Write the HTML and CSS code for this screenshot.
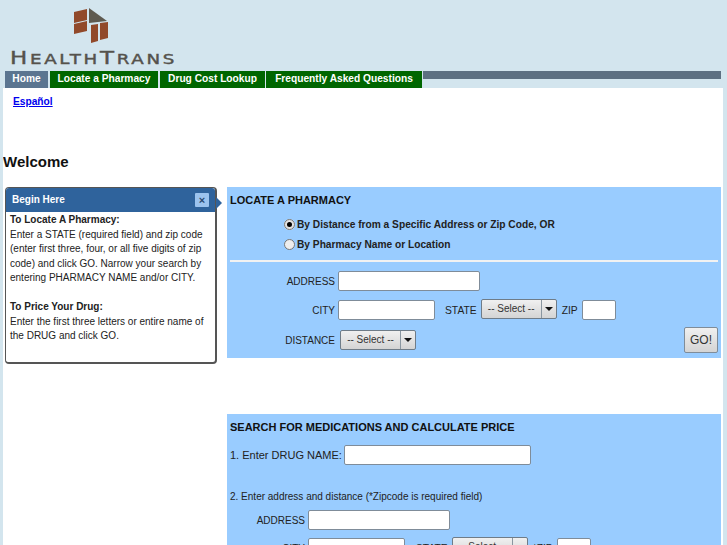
FILE: index.html
```html
<!DOCTYPE html>
<html lang="en">
<head>
    <meta charset="UTF-8">
    <meta name="viewport" content="width=device-width, initial-scale=1.0">
    <title>HealthTrans</title>
    <link rel="stylesheet" href="styles.css">
</head>
<body>
    <div class="header">
        <svg class="logo-mark" width="40" height="38" viewBox="0 0 40 38">
            <polygon fill="#91492a" points="4,7 17,4 17,15 4,18"/>
            <polygon fill="#91492a" points="4,19 17,16 17,26 4,29"/>
            <polygon fill="#5e5a50" points="19,3 37,16 19,18"/>
            <polygon fill="#91492a" points="21,20 28,19 28,36 21,38"/>
            <polygon fill="#91492a" points="30,18 38,17 38,33 30,35"/>
        </svg>
        <div class="logo-text"><span class="big">H</span>EALTH<span class="big">T</span>RANS</div>
    </div>

    <div class="nav">
        <a class="tab tab-home" href="#">Home</a>
        <a class="tab tab-locate" href="#">Locate a Pharmacy</a>
        <a class="tab tab-drug" href="#">Drug Cost Lookup</a>
        <a class="tab tab-faq" href="#">Frequently Asked Questions</a>
        <div class="nav-band"></div>
    </div>

    <div class="content">
        <a class="lang" href="#">Español</a>
        <h1>Welcome</h1>

        <div class="columns">
            <div class="tip">
                <div class="tip-head">
                    <span>Begin Here</span>
                    <span class="tip-close">×</span>
                </div>
                <div class="tip-body">
                    <b>To Locate A Pharmacy:</b><br>
                    Enter a STATE (required field) and zip code (enter first three, four, or all five digits of zip code) and click GO. Narrow your search by entering PHARMACY NAME and/or CITY.<br><br>
                    <b>To Price Your Drug:</b><br>
                    Enter the first three letters or entire name of the DRUG and click GO.
                </div>
            </div>

            <div class="forms">
                <div class="panel panel-locate">
                    <div class="panel-title">LOCATE A PHARMACY</div>
                    <div class="radios">
                        <label class="radio-row"><span class="radio checked"></span>By Distance from a Specific Address or Zip Code, OR</label>
                        <label class="radio-row"><span class="radio"></span>By Pharmacy Name or Location</label>
                    </div>
                    <div class="rule"></div>
                    <div class="row row-address">
                        <span class="lbl">ADDRESS</span>
                        <span class="input input-long"></span>
                    </div>
                    <div class="row row-city">
                        <span class="lbl">CITY</span>
                        <span class="input input-city"></span>
                        <span class="lbl-state">STATE</span>
                        <span class="select"><span class="select-text">-- Select --</span><span class="select-arrow"></span></span>
                        <span class="lbl-zip">ZIP</span>
                        <span class="input input-zip"></span>
                    </div>
                    <div class="row row-distance">
                        <span class="lbl">DISTANCE</span>
                        <span class="select"><span class="select-text">-- Select --</span><span class="select-arrow"></span></span>
                        <span class="go">GO!</span>
                    </div>
                </div>

                <div class="panel panel-drug">
                    <div class="panel-title">SEARCH FOR MEDICATIONS AND CALCULATE PRICE</div>
                    <div class="row row-drug">
                        <span>1. Enter DRUG NAME:</span>
                        <span class="input input-drug"></span>
                    </div>
                    <div class="step-two">2. Enter address and distance (*Zipcode is required field)</div>
                    <div class="row row-address-2">
                        <span class="lbl">ADDRESS</span>
                        <span class="input input-long"></span>
                    </div>
                    <div class="row row-city-2">
                        <span class="lbl">CITY</span>
                        <span class="input input-city"></span>
                        <span class="lbl-state">STATE</span>
                        <span class="select"><span class="select-text">-- Select --</span><span class="select-arrow"></span></span>
                        <span class="lbl-zip">*ZIP</span>
                        <span class="input input-zip"></span>
                    </div>
                </div>
            </div>
        </div>
    </div>
</body>
</html>
```

FILE: styles.css
```css
html, body {
    height: 100%;
    overflow: hidden;
}

body {
    margin: 0;
    padding: 0;
    background-color: #d3e5ee;
    font-family: "Liberation Sans", Arial, sans-serif;
    font-size: 10.3px;
    color: #222;
}

.header {
    height: 71px;
    position: relative;
    box-sizing: border-box;
    padding: 48px 0 0 10px;
}

.logo-mark {
    position: absolute;
    left: 70px;
    top: 5px;
}

.logo-text {
    width: 122px;
    font-family: "DejaVu Sans", sans-serif;
    font-size: 13.5px;
    line-height: 20px;
    letter-spacing: 2px;
    color: #55524c;
    -webkit-text-stroke: 0.4px #55524c;
    white-space: nowrap;
    transform: scaleX(1.35);
    transform-origin: left center;
}

.logo-text .big {
    font-size: 17px;
}

.nav {
    display: flex;
    height: 17px;
    margin-left: 5px;
    margin-right: 6px;
}

.tab {
    display: block;
    box-sizing: border-box;
    height: 17px;
    line-height: 15px;
    color: #fff;
    font-weight: bold;
    font-size: 10.2px;
    text-align: center;
    text-decoration: none;
    background-color: #006600;
    margin-right: 1px;
}

.tab-home {
    width: 43px;
    margin-right: 2px;
    background-color: #5b7590;
}

.tab-locate {
    width: 108px;
    margin-right: 2px;
}

.tab-drug {
    width: 105px;
}

.tab-faq {
    width: 156px;
}

.nav-band {
    flex: 1;
    height: 8px;
    background-color: #5d7082;
}

.content {
    background-color: #fff;
    margin: 0 4px 0 3px;
    height: 457px;
    overflow: hidden;
}

.lang {
    display: block;
    margin: 7px 0 0 10px;
    font-weight: bold;
    font-size: 10.2px;
    line-height: 13px;
    color: #0000ee;
}

h1 {
    font-size: 15px;
    line-height: 18px;
    margin: 45px 0 16px 0;
    color: #111;
}

.columns {
    display: flex;
    align-items: flex-start;
}

.tip {
    position: relative;
    box-sizing: border-box;
    width: 212px;
    height: 177px;
    margin: 0 10px 0 2px;
    background-color: #fff;
    border: 1px solid #555;
    border-right-width: 2px;
    border-bottom-width: 2px;
    border-radius: 4px;
    font-size: 10px;
    line-height: 14.5px;
}

.tip::after {
    content: "";
    position: absolute;
    right: -7px;
    top: 9px;
    border-left: 6px solid #2f639c;
    border-top: 6px solid transparent;
    border-bottom: 6px solid transparent;
}

.tip-head {
    display: flex;
    justify-content: space-between;
    align-items: center;
    height: 24px;
    padding: 0 6px;
    background-color: #2f639c;
    border-radius: 3px 3px 0 0;
    color: #fff;
    font-weight: bold;
    font-size: 10px;
}

.tip-close {
    width: 14px;
    height: 14px;
    line-height: 14px;
    text-align: center;
    background-color: #9cc3ee;
    color: #2a4a70;
    border-radius: 1px;
    font-size: 11px;
}

.tip-body {
    padding: 1px 4px 0;
}

.forms {
    width: 494px;
}

.panel {
    background-color: #99ccff;
    box-sizing: border-box;
    padding: 0 3px;
}

.panel-locate {
    height: 171px;
    margin-bottom: 56px;
    position: relative;
}

.panel-title {
    font-weight: bold;
    font-size: 11px;
    line-height: 14px;
    padding-top: 6px;
    color: #111;
}

.radios {
    padding: 7px 0 0 54px;
}

.radio-row {
    display: flex;
    align-items: center;
    height: 20px;
    font-weight: bold;
    font-size: 10.2px;
}

.radio {
    box-sizing: border-box;
    width: 11px;
    height: 11px;
    margin-right: 2px;
    border: 1px solid #777;
    border-radius: 50%;
    background-color: #eee;
}

.radio.checked {
    border: 3px solid #e4e4e4;
    outline: 1px solid #777;
    outline-offset: -1px;
    background-color: #000;
}

.rule {
    height: 2px;
    margin-top: 6px;
    background-color: #f2f2f2;
}

.row {
    display: flex;
    align-items: center;
}

.lbl {
    width: 105px;
    margin-right: 3px;
    text-align: right;
    font-size: 10px;
}

.input {
    display: block;
    box-sizing: border-box;
    height: 20px;
    background-color: #fff;
    border: 1px solid #7f8c99;
    border-radius: 2px;
}

.input-long {
    width: 142px;
}

.input-city {
    width: 97px;
}

.input-zip {
    width: 34px;
}

.input-drug {
    width: 187px;
    margin-left: 2px;
}

.row-address {
    margin-top: 9px;
}

.row-city {
    margin-top: 8px;
}

.lbl-state {
    margin: 0 4px 0 10px;
}

.row-city-2 .lbl-state {
    margin-left: 11px;
}

.lbl-zip {
    margin: 0 4px 0 5px;
}

.select {
    display: flex;
    box-sizing: border-box;
    width: 76px;
    height: 20px;
    border: 1px solid #6f7c88;
    border-radius: 2px;
    background: linear-gradient(#f0f0f0, #d4d4d4);
}

.row-city .select,
.row-city-2 .select {
    margin-bottom: 2px;
}

.select-text {
    flex: 1;
    line-height: 18px;
    text-align: center;
    font-size: 10px;
    color: #333;
}

.select-arrow {
    position: relative;
    width: 14px;
    border-left: 1px solid #8a96a0;
}

.select-arrow::after {
    content: "";
    position: absolute;
    left: 3px;
    top: 7px;
    border-top: 4px solid #111;
    border-left: 4px solid transparent;
    border-right: 4px solid transparent;
}

.row-distance {
    margin-top: 9px;
}

.row-distance .lbl {
    margin-right: 5px;
}

.go {
    position: absolute;
    right: 3px;
    top: 140px;
    box-sizing: border-box;
    width: 34px;
    height: 26px;
    line-height: 24px;
    text-align: center;
    font-size: 12px;
    color: #333;
    border: 1px solid #7f8c99;
    border-radius: 2px;
    background: linear-gradient(#f0f0f0, #d4d4d4);
}

.panel-drug {
    height: 200px;
}

.row-drug {
    margin-top: 11px;
    font-size: 11px;
}

.step-two {
    margin-top: 25px;
    line-height: 14px;
    font-size: 10px;
}

.row-address-2 {
    margin-top: 6px;
}

.row-address-2 .lbl,
.row-city-2 .lbl {
    width: 75px;
}

.row-city-2 {
    margin-top: 7px;
}
```
